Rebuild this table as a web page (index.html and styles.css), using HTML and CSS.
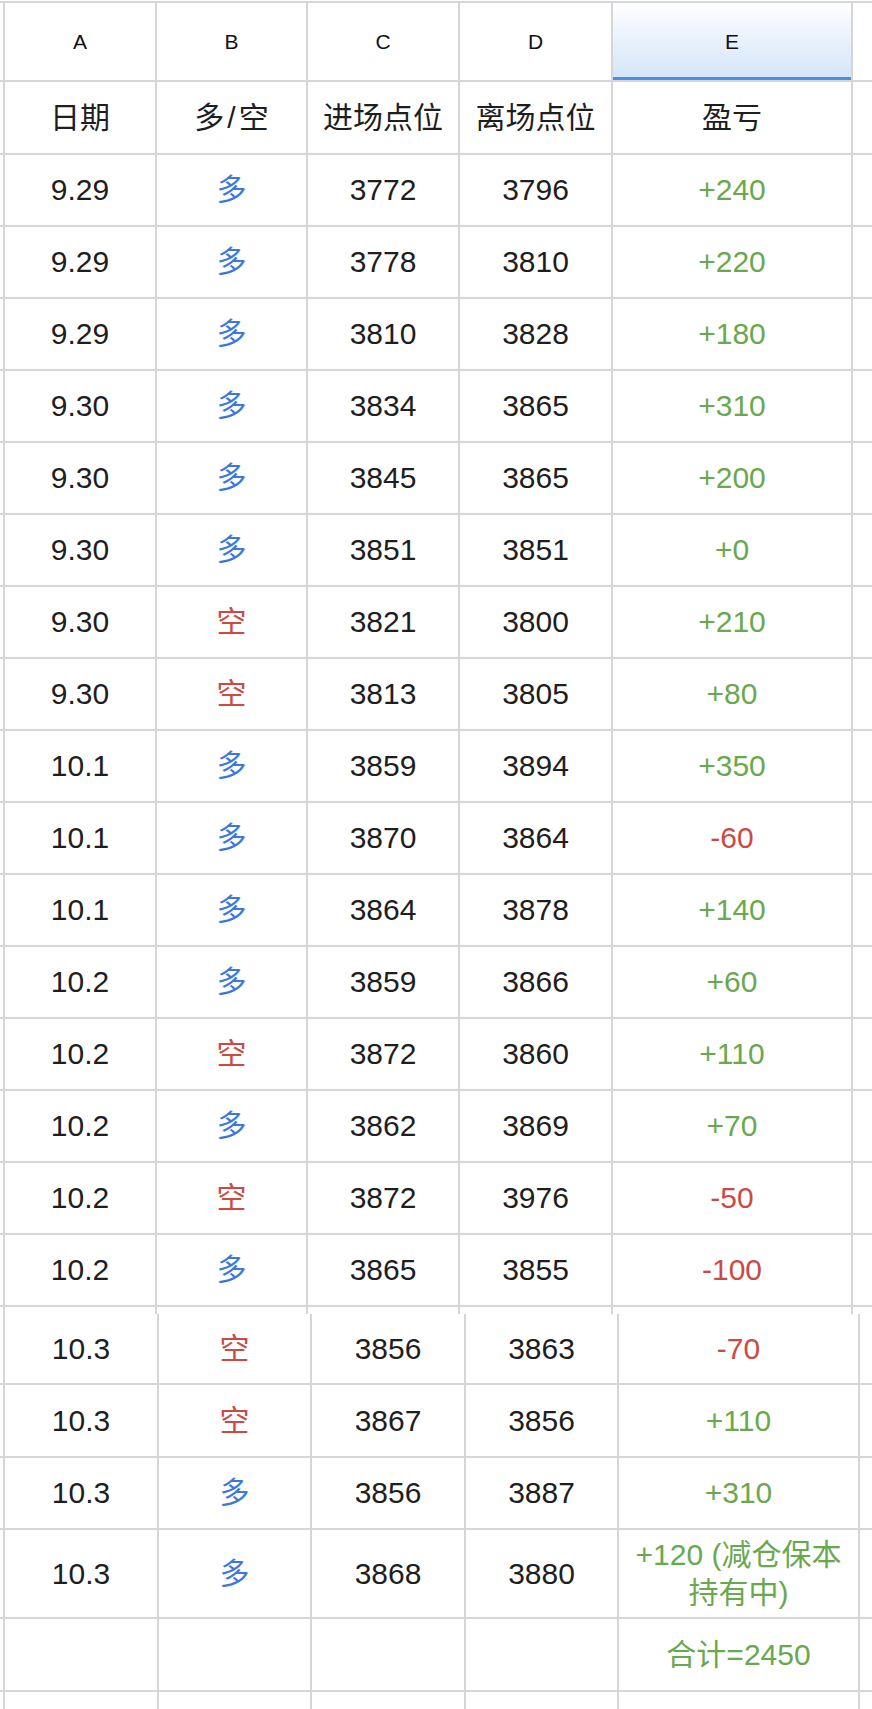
FILE: index.html
```html
<!DOCTYPE html>
<html lang="zh-CN">
<head>
<meta charset="utf-8">
<title>交易记录</title>
<link rel="stylesheet" href="styles.css">
</head>
<body>
<div class="sheet sheet-top">
  <div class="c"></div><div class="c col-head">A</div><div class="c col-head">B</div><div class="c col-head">C</div><div class="c col-head">D</div><div class="c col-head col-head-sel">E</div><div class="c"></div>
  <div class="c"></div><div class="c">日期</div><div class="c spaced">多/空</div><div class="c">进场点位</div><div class="c">离场点位</div><div class="c">盈亏</div><div class="c"></div>

  <div class="c"></div><div class="c">9.29</div><div class="c long">多</div><div class="c">3772</div><div class="c">3796</div><div class="c pos">+240</div><div class="c"></div>
  <div class="c"></div><div class="c">9.29</div><div class="c long">多</div><div class="c">3778</div><div class="c">3810</div><div class="c pos">+220</div><div class="c"></div>
  <div class="c"></div><div class="c">9.29</div><div class="c long">多</div><div class="c">3810</div><div class="c">3828</div><div class="c pos">+180</div><div class="c"></div>
  <div class="c"></div><div class="c">9.30</div><div class="c long">多</div><div class="c">3834</div><div class="c">3865</div><div class="c pos">+310</div><div class="c"></div>
  <div class="c"></div><div class="c">9.30</div><div class="c long">多</div><div class="c">3845</div><div class="c">3865</div><div class="c pos">+200</div><div class="c"></div>
  <div class="c"></div><div class="c">9.30</div><div class="c long">多</div><div class="c">3851</div><div class="c">3851</div><div class="c pos">+0</div><div class="c"></div>
  <div class="c"></div><div class="c">9.30</div><div class="c short">空</div><div class="c">3821</div><div class="c">3800</div><div class="c pos">+210</div><div class="c"></div>
  <div class="c"></div><div class="c">9.30</div><div class="c short">空</div><div class="c">3813</div><div class="c">3805</div><div class="c pos">+80</div><div class="c"></div>
  <div class="c"></div><div class="c">10.1</div><div class="c long">多</div><div class="c">3859</div><div class="c">3894</div><div class="c pos">+350</div><div class="c"></div>
  <div class="c"></div><div class="c">10.1</div><div class="c long">多</div><div class="c">3870</div><div class="c">3864</div><div class="c neg">-60</div><div class="c"></div>
  <div class="c"></div><div class="c">10.1</div><div class="c long">多</div><div class="c">3864</div><div class="c">3878</div><div class="c pos">+140</div><div class="c"></div>
  <div class="c"></div><div class="c">10.2</div><div class="c long">多</div><div class="c">3859</div><div class="c">3866</div><div class="c pos">+60</div><div class="c"></div>
  <div class="c"></div><div class="c">10.2</div><div class="c short">空</div><div class="c">3872</div><div class="c">3860</div><div class="c pos">+110</div><div class="c"></div>
  <div class="c"></div><div class="c">10.2</div><div class="c long">多</div><div class="c">3862</div><div class="c">3869</div><div class="c pos">+70</div><div class="c"></div>
  <div class="c"></div><div class="c">10.2</div><div class="c short">空</div><div class="c">3872</div><div class="c">3976</div><div class="c neg">-50</div><div class="c"></div>
  <div class="c"></div><div class="c">10.2</div><div class="c long">多</div><div class="c">3865</div><div class="c">3855</div><div class="c neg">-100</div><div class="c"></div>

  <div class="c"></div><div class="c"></div><div class="c"></div><div class="c"></div><div class="c"></div><div class="c"></div><div class="c"></div>
</div>
<div class="sheet sheet-bottom">
  <div class="c"></div><div class="c">10.3</div><div class="c short">空</div><div class="c">3856</div><div class="c">3863</div><div class="c neg">-70</div><div class="c"></div>
  <div class="c"></div><div class="c">10.3</div><div class="c short">空</div><div class="c">3867</div><div class="c">3856</div><div class="c pos">+110</div><div class="c"></div>
  <div class="c"></div><div class="c">10.3</div><div class="c long">多</div><div class="c">3856</div><div class="c">3887</div><div class="c pos">+310</div><div class="c"></div>
  <div class="c"></div><div class="c">10.3</div><div class="c long">多</div><div class="c">3868</div><div class="c">3880</div><div class="c pos wrap">+120 (减仓保本持有中)</div><div class="c"></div>
  <div class="c"></div><div class="c"></div><div class="c"></div><div class="c"></div><div class="c"></div><div class="c pos">合计=2450</div><div class="c"></div>
  <div class="c"></div><div class="c"></div><div class="c"></div><div class="c"></div><div class="c"></div><div class="c"></div><div class="c"></div>
</div>
</body>
</html>
```
FILE: styles.css
```css
html, body {
  margin: 0;
  padding: 0;
  background: #ffffff;
}
body {
  width: 872px;
  height: 1709px;
  overflow: hidden;
  font-family: "Liberation Sans", "Noto Sans CJK SC", sans-serif;
  color: #1e1e1e;
}
.sheet {
  display: grid;
  gap: 2px;
  background: #d6d6d6;
}
.sheet-top {
  margin-top: 1px;
  padding-top: 2px;
  grid-template-columns: 3px 150px 149px 150px 151px 238px 1fr;
  grid-template-rows: 77px 71px repeat(16, 70px) 7px;
}
.sheet-bottom {
  grid-template-columns: 3px 152px 151px 152px 151px 239px 1fr;
  grid-template-rows: 69px 71px 70px 87px 71px 17px;
}
.c {
  background: #ffffff;
  display: flex;
  align-items: center;
  justify-content: center;
  text-align: center;
  font-size: 30px;
  line-height: 1;
  min-width: 0;
  overflow: hidden;
}
.spaced {
  letter-spacing: 3px;
  padding-left: 3px;
}
.col-head {
  font-size: 21px;
  color: #111111;
}
.col-head-sel {
  background: linear-gradient(to bottom, #ffffff 0%, #eaf2fc 45%, #d3e5f8 100%);
  box-shadow: inset 0 -3px 0 #4a90e2;
}
.long {
  color: #3d78d8;
}
.short {
  color: #cc4a44;
}
.pos {
  color: #6aa84f;
}
.neg {
  color: #cc4a44;
}
.wrap {
  padding: 0 8px;
  line-height: 38px;
  font-size: 30px;
}
```
